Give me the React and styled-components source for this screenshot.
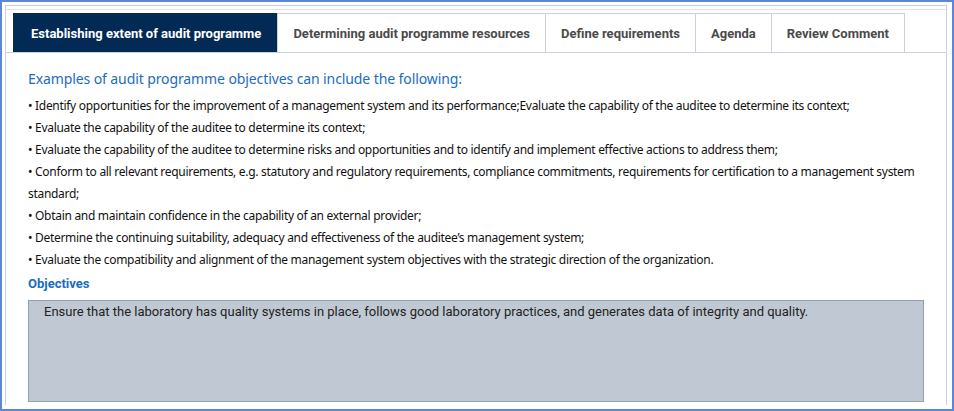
import React, { useState } from 'react';
import styled, { createGlobalStyle } from 'styled-components';

const GlobalStyle = createGlobalStyle`
  html, body {
    margin: 0;
    padding: 0;
    background: #ffffff;
  }
  * {
    box-sizing: border-box;
  }
`;

const tabs = [
  'Establishing extent of audit programme',
  'Determining audit programme resources',
  'Define requirements',
  'Agenda',
  'Review Comment',
];

const objectives = [
  'Identify opportunities for the improvement of a management system and its performance;Evaluate the capability of the auditee to determine its context;',
  'Evaluate the capability of the auditee to determine its context;',
  'Evaluate the capability of the auditee to determine risks and opportunities and to identify and implement effective actions to address them;',
  'Conform to all relevant requirements, e.g. statutory and regulatory requirements, compliance commitments, requirements for certification to a management system standard;',
  'Obtain and maintain confidence in the capability of an external provider;',
  'Determine the continuing suitability, adequacy and effectiveness of the auditee\u2019s management system;',
  'Evaluate the compatibility and alignment of the management system objectives with the strategic direction of the organization.',
];

export default function App() {
  const [active, setActive] = useState(0);

  return (
    <Frame>
      <GlobalStyle />
      <Panel>
        <TabBar>
          {tabs.map((t, i) => (
            <Tab key={t} active={i === active} onClick={() => setActive(i)}>
              {t}
            </Tab>
          ))}
        </TabBar>
        <Content>
          <Heading>Examples of audit programme objectives can include the following:</Heading>
          <List>
            {objectives.map(o => (
              <Item key={o}>{'\u2022 ' + o}</Item>
            ))}
          </List>
          <Label>Objectives</Label>
          <TextBox
            readOnly
            value="Ensure that the laboratory has quality systems in place, follows good laboratory practices, and generates data of integrity and quality."
          />
        </Content>
      </Panel>
    </Frame>
  );
}

const Frame = styled.div`
  width: 954px;
  height: 411px;
  border: 2px solid #5a87d6;
  padding: 3px 5px 4px 3px;
  overflow: hidden;
`;

const Panel = styled.div`
  height: 100%;
  border: 1px solid #c9d1dc;
  border-bottom: none;
  padding-top: 3px;
  display: flex;
  flex-direction: column;
`;

const TabBar = styled.div`
  display: flex;
  border-top: 1px solid #dfe4ea;
  border-bottom: 1px solid #c9d1dc;
  padding: 3px 0 0 8px;
`;

const Tab = styled.div`
  cursor: pointer;
  height: 39px;
  display: flex;
  align-items: center;
  padding: ${props => (props.active ? '0 16px 0 17px' : '0 15px')};
  margin-left: -1px;
  border: 1px solid ${props => (props.active ? '#022a54' : '#c9d1dc')};
  border-bottom: none;
  background: ${props => (props.active ? '#022a54' : '#ffffff')};
  color: ${props => (props.active ? '#ffffff' : '#4a4a4a')};
  font-family: Roboto, 'Liberation Sans', sans-serif;
  font-weight: 700;
  font-size: 13px;
  white-space: nowrap;
`;

const Content = styled.div`
  padding: 15px 22px 0 22px;
`;

const Heading = styled.div`
  font-family: 'Noto Sans', 'Liberation Sans', sans-serif;
  font-size: 14px;
  letter-spacing: -0.1px;
  color: #1a6cc3;
  line-height: 22px;
  margin-bottom: 5px;
`;

const List = styled.div`
  font-family: 'Noto Sans', 'Liberation Sans', sans-serif;
  font-size: 12px;
  letter-spacing: -0.3px;
  color: #111111;
  line-height: 22px;
`;

const Item = styled.div``;

const Label = styled.div`
  font-family: Roboto, 'Liberation Sans', sans-serif;
  font-weight: 700;
  font-size: 13px;
  color: #1a6cc3;
  line-height: 22px;
  margin-top: 2px;
`;

const TextBox = styled.textarea`
  display: block;
  margin-top: 5px;
  width: 896px;
  height: 102px;
  resize: none;
  background: #c0c9d3;
  border: 1px solid #8fa2b6;
  padding: 3px 15px;
  font-family: Roboto, 'Liberation Sans', sans-serif;
  font-size: 13px;
  color: #222;
  outline: none;
`;
